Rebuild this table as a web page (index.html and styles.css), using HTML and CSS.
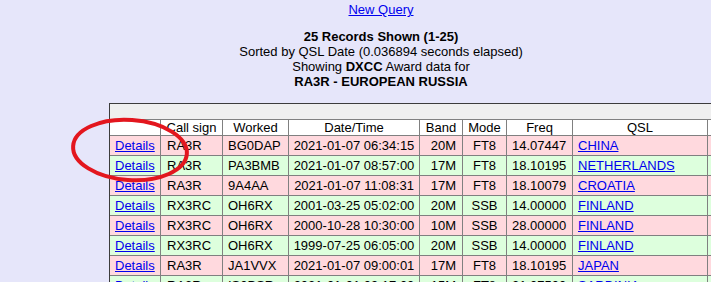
FILE: index.html
```html
<!DOCTYPE html>
<html>
<head>
<meta charset="utf-8">
<link rel="stylesheet" href="styles.css">
</head>
<body>
<div class="page">
  <div class="intro">
    <p class="nq"><a href="#">New Query</a></p>
    <p class="summary"><b>25 Records Shown (1-25)</b><br>Sorted by QSL Date (0.036894 seconds elapsed)<br>Showing <b>DXCC</b> Award data for<br><b>RA3R - EUROPEAN RUSSIA</b></p>
  </div>
  <table class="qsl">
    <colgroup>
      <col class="c-det"><col class="c-call"><col class="c-work"><col class="c-date"><col class="c-band"><col class="c-mode"><col class="c-freq"><col class="c-qsl"><col class="c-more">
    </colgroup>
    <tr class="bar"><td colspan="9"></td></tr>
    <tr class="head"><th></th><th>Call sign</th><th>Worked</th><th>Date/Time</th><th>Band</th><th>Mode</th><th>Freq</th><th>QSL</th><th></th></tr>
    <tr class="pink"><td class="l"><a href="#">Details</a></td><td class="l call">RA3R</td><td class="l">BG0DAP</td><td class="c">2021-01-07 06:34:15</td><td class="r">20M</td><td class="c">FT8</td><td class="r">14.07447</td><td class="l"><a href="#">CHINA</a></td><td></td></tr>
    <tr class="green"><td class="l"><a href="#">Details</a></td><td class="l call">RA3R</td><td class="l">PA3BMB</td><td class="c">2021-01-07 08:57:00</td><td class="r">17M</td><td class="c">FT8</td><td class="r">18.10195</td><td class="l"><a href="#">NETHERLANDS</a></td><td></td></tr>
    <tr class="pink"><td class="l"><a href="#">Details</a></td><td class="l call">RA3R</td><td class="l">9A4AA</td><td class="c">2021-01-07 11:08:31</td><td class="r">17M</td><td class="c">FT8</td><td class="r">18.10079</td><td class="l"><a href="#">CROATIA</a></td><td></td></tr>
    <tr class="green"><td class="l"><a href="#">Details</a></td><td class="l call">RX3RC</td><td class="l">OH6RX</td><td class="c">2001-03-25 05:02:00</td><td class="r">20M</td><td class="c">SSB</td><td class="r">14.00000</td><td class="l"><a href="#">FINLAND</a></td><td></td></tr>
    <tr class="pink"><td class="l"><a href="#">Details</a></td><td class="l call">RX3RC</td><td class="l">OH6RX</td><td class="c">2000-10-28 10:30:00</td><td class="r">10M</td><td class="c">SSB</td><td class="r">28.00000</td><td class="l"><a href="#">FINLAND</a></td><td></td></tr>
    <tr class="green"><td class="l"><a href="#">Details</a></td><td class="l call">RX3RC</td><td class="l">OH6RX</td><td class="c">1999-07-25 06:05:00</td><td class="r">20M</td><td class="c">SSB</td><td class="r">14.00000</td><td class="l"><a href="#">FINLAND</a></td><td></td></tr>
    <tr class="pink"><td class="l"><a href="#">Details</a></td><td class="l call">RA3R</td><td class="l">JA1VVX</td><td class="c">2021-01-07 09:00:01</td><td class="r">17M</td><td class="c">FT8</td><td class="r">18.10195</td><td class="l"><a href="#">JAPAN</a></td><td></td></tr>
    <tr class="green"><td class="l"><a href="#">Details</a></td><td class="l call">RA3R</td><td class="l">IS0BSR</td><td class="c">2021-01-01 09:17:00</td><td class="r">15M</td><td class="c">FT8</td><td class="r">21.07500</td><td class="l"><a href="#">SARDINIA</a></td><td></td></tr>
  </table>
</div>
<svg class="circle" width="130" height="76" viewBox="0 0 130 76">
  <ellipse cx="63" cy="37" rx="57" ry="30" fill="none" stroke="#e3161e" stroke-width="4" transform="rotate(4 63 37)"/>
</svg>
</body>
</html>
```

FILE: styles.css
```css
html, body {
  margin: 0;
  padding: 0;
  overflow: hidden;
  background: #e6e6fa;
}
body {
  font-family: "Liberation Sans", Arial, sans-serif;
  font-size: 13px;
  line-height: 15px;
  color: #000;
}
a {
  color: #0000ee;
  text-decoration: underline;
}
.page {
  width: 762px;
  padding-top: 2px;
}
.intro {
  text-align: center;
}
.intro p {
  margin: 0;
}
.nq {
  margin-bottom: 12px !important;
}
.summary {
  margin-bottom: 14px !important;
}
.qsl {
  margin-left: 109px;
  border-collapse: separate;
  border-spacing: 0;
  table-layout: fixed;
  width: 700px;
  border-top: 1px solid #3c3c3c;
  border-left: 1px solid #3c3c3c;
}
.c-det { width: 51px; }
.c-call { width: 62px; }
.c-work { width: 66px; }
.c-date { width: 131px; }
.c-band { width: 43px; }
.c-mode { width: 44px; }
.c-freq { width: 66px; }
.c-qsl { width: 135px; }
.c-more { width: 102px; }
.qsl td, .qsl th {
  box-sizing: border-box;
  border-right: 1px solid #808080;
  border-bottom: 1px solid #808080;
  white-space: nowrap;
  overflow: hidden;
}
.qsl th {
  font-weight: normal;
  background: #fff;
  padding: 0 2px;
  height: 16px;
  text-align: center;
}
.qsl td {
  padding: 2px 5px 2px 5px;
  height: 20px;
}
.qsl .bar td {
  background: #efefef;
  height: 16px;
  padding: 0;
  border-right: none;
}
.qsl td.l { text-align: left; }
.qsl td.call { padding-left: 6px; }
.qsl td.r { text-align: right; padding-right: 6px; }
.qsl td.c { text-align: center; padding-left: 2px; padding-right: 2px; }
.pink td { background: #ffd9de; }
.green td { background: #ddffdd; }
.circle {
  position: absolute;
  left: 67px;
  top: 113px;
}
```
